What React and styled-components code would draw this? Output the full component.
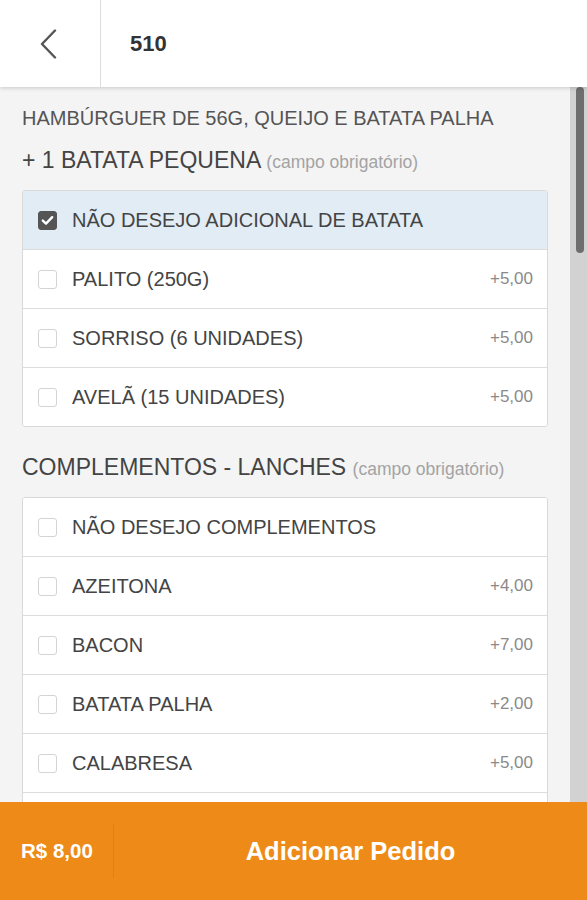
import React from "react";
import styled, { createGlobalStyle } from "styled-components";

const Global = createGlobalStyle`
  html, body { margin: 0; padding: 0; }
  body { font-family: "Liberation Sans", Arial, sans-serif; background: #f4f4f4; }
  * { box-sizing: border-box; }
`;

const Screen = styled.div`
  width: 587px;
  height: 900px;
  display: flex;
  flex-direction: column;
  overflow: hidden;
  background: #f4f4f4;
`;

const Header = styled.header`
  height: 87px;
  flex: 0 0 87px;
  display: flex;
  align-items: stretch;
  background: #fff;
  box-shadow: 0 1px 4px rgba(0, 0, 0, 0.18);
  position: relative;
  z-index: 2;
`;

const BackButton = styled.button`
  width: 101px;
  border: 0;
  border-right: 1px solid #dcdcdc;
  background: transparent;
  display: flex;
  align-items: center;
  justify-content: center;
  padding: 0;
  padding-right: 2px;
`;

const Title = styled.h1`
  margin: 0;
  padding-left: 29px;
  display: flex;
  align-items: center;
  font-size: 22px;
  font-weight: 700;
  color: #333;
`;

const Main = styled.div`
  flex: 1;
  display: flex;
  min-height: 0;
`;

const Content = styled.div`
  flex: 1;
  overflow: hidden;
  padding: 18px 22px 0 22px;
`;

const Track = styled.div`
  width: 17px;
  flex: 0 0 17px;
  background: #d2d2d2;
  display: flex;
  justify-content: center;
  padding-left: 3px;
`;

const Thumb = styled.div`
  width: 8px;
  height: 166px;
  border-radius: 4px;
  background: #6e6e6e;
`;

const Description = styled.p`
  margin: 0;
  font-size: 20px;
  line-height: 26px;
  color: #555;
  text-transform: uppercase;
`;

const Section = styled.section`
  margin-top: ${(p) => p.$gap}px;
`;

const SectionTitle = styled.h2`
  margin: 0;
  font-size: 23px;
  font-weight: 400;
  line-height: 28px;
  color: #444;
`;

const Required = styled.span`
  font-size: 17.5px;
  color: #a3a3a3;
`;

const Card = styled.div`
  margin-top: 14px;
  background: #fff;
  border: 1px solid #d9d9d9;
  border-radius: 3px;
  overflow: hidden;
`;

const Row = styled.label`
  box-sizing: content-box;
  height: 58px;
  display: flex;
  align-items: center;
  padding: 0 14px 0 15px;
  border-top: ${(p) => (p.$first ? "0" : "1px solid #dcdcdc")};
  background: ${(p) => (p.$checked ? "#e1ecf4" : "#fff")};
`;

const Box = styled.span`
  width: 19px;
  height: 19px;
  flex: 0 0 19px;
  border-radius: 3px;
  border: 1px solid ${(p) => (p.$checked ? "#555" : "#d4d4d4")};
  background: ${(p) => (p.$checked ? "#555" : "#fff")};
  display: flex;
  align-items: center;
  justify-content: center;
`;

const Label = styled.span`
  flex: 1;
  margin-left: 15px;
  font-size: 20px;
  color: #444;
`;

const Price = styled.span`
  font-size: 17px;
  color: #8a8a8a;
`;

const Footer = styled.footer`
  height: 98px;
  flex: 0 0 98px;
  background: #ee8b18;
  display: flex;
  align-items: center;
  color: #fff;
  font-weight: 700;
`;

const Total = styled.div`
  width: 114px;
  height: 54px;
  padding-left: 21px;
  display: flex;
  align-items: center;
  font-size: 20.5px;
  border-right: 1px solid rgba(0, 0, 0, 0.07);
`;

const Submit = styled.button`
  flex: 1;
  height: 100%;
  border: 0;
  background: transparent;
  color: #fff;
  font-family: inherit;
  font-weight: 700;
  font-size: 25.5px;
  padding: 0;
`;

const Check = () => (
  <svg width="13" height="11" viewBox="0 0 13 11">
    <path d="M1.8 5.6 L5 8.6 L11.2 2.2" fill="none" stroke="#fff" strokeWidth="2.4" strokeLinecap="round" strokeLinejoin="round" />
  </svg>
);

const Option = ({ label, price, checked, first }) => (
  <Row $checked={checked} $first={first}>
    <Box $checked={checked}>{checked && <Check />}</Box>
    <Label>{label}</Label>
    {price && <Price>{price}</Price>}
  </Row>
);

const batata = [
  { label: "NÃO DESEJO ADICIONAL DE BATATA", checked: true },
  { label: "PALITO (250G)", price: "+5,00" },
  { label: "SORRISO (6 UNIDADES)", price: "+5,00" },
  { label: "AVELÃ (15 UNIDADES)", price: "+5,00" },
];

const complementos = [
  { label: "NÃO DESEJO COMPLEMENTOS" },
  { label: "AZEITONA", price: "+4,00" },
  { label: "BACON", price: "+7,00" },
  { label: "BATATA PALHA", price: "+2,00" },
  { label: "CALABRESA", price: "+5,00" },
  { label: "CATUPIRY", price: "+4,00" },
];

export default function App() {
  return (
    <>
      <Global />
      <Screen>
        <Header>
          <BackButton aria-label="Voltar">
            <svg width="20" height="30" viewBox="0 0 20 30">
              <path d="M16 1.5 L3 15 L16 28.5" fill="none" stroke="#555" strokeWidth="2.4" strokeLinecap="round" strokeLinejoin="round" />
            </svg>
          </BackButton>
          <Title>510</Title>
        </Header>
        <Main>
          <Content>
            <Description>Hambúrguer de 56G, queijo e batata palha</Description>
            <Section $gap={15}>
              <SectionTitle>
                + 1 BATATA PEQUENA <Required>(campo obrigatório)</Required>
              </SectionTitle>
              <Card>
                {batata.map((o, i) => (
                  <Option key={o.label} {...o} first={i === 0} />
                ))}
              </Card>
            </Section>
            <Section $gap={26}>
              <SectionTitle>
                COMPLEMENTOS - LANCHES <Required>(campo obrigatório)</Required>
              </SectionTitle>
              <Card>
                {complementos.map((o, i) => (
                  <Option key={o.label} {...o} first={i === 0} />
                ))}
              </Card>
            </Section>
          </Content>
          <Track>
            <Thumb />
          </Track>
        </Main>
        <Footer>
          <Total>R$ 8,00</Total>
          <Submit>Adicionar Pedido</Submit>
        </Footer>
      </Screen>
    </>
  );
}
